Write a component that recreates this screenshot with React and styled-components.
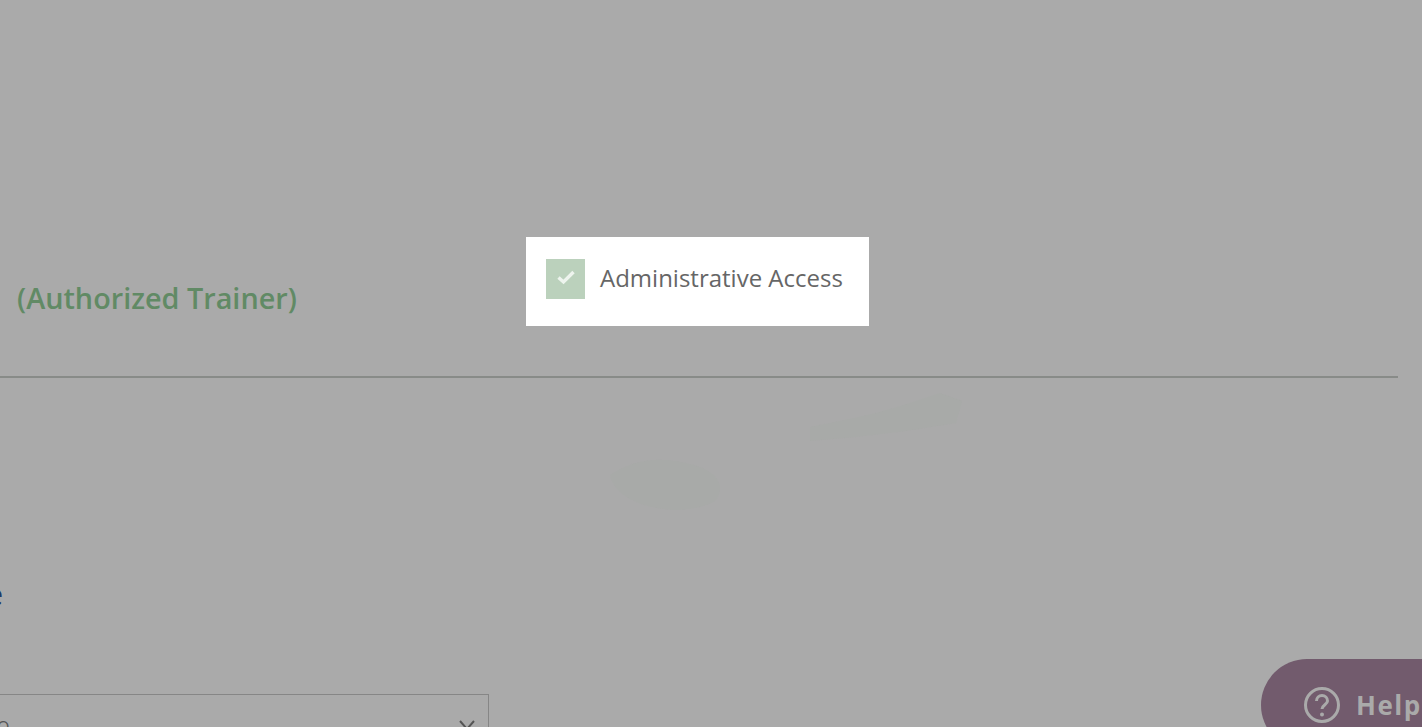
import React from "react";
import styled, { createGlobalStyle } from "styled-components";

const GlobalStyle = createGlobalStyle`
  html, body {
    margin: 0;
    padding: 0;
    height: 100%;
    overflow: hidden;
    background-color: #aaaaaa;
    font-family: "Open Sans", "Liberation Sans", sans-serif;
  }
`;

const Page = styled.div`
  position: relative;
  width: 1422px;
  height: 727px;
  overflow: hidden;
  background-color: #aaaaaa;
`;

const Content = styled.div`
  display: flex;
  flex-direction: column;
  width: 1398px;
  padding-top: 279px;
`;

const Role = styled.div`
  padding-left: 17px;
  font-size: 28.8px;
  line-height: 38px;
  font-weight: 600;
  color: #618a65;
`;

const Divider = styled.hr`
  width: 100%;
  height: 2px;
  margin: 59px 0 0;
  border: none;
  background-color: #888b88;
`;

const SectionTitle = styled.h2`
  width: 3px;
  height: 44px;
  margin: 194px 0 0;
  overflow: hidden;
  direction: rtl;
  font-size: 30px;
  line-height: 44px;
  font-weight: 400;
  color: #1f3a66;
`;

const SelectBox = styled.div`
  display: flex;
  align-items: flex-start;
  justify-content: space-between;
  box-sizing: border-box;
  width: 489px;
  height: 60px;
  margin-top: 78px;
  padding: 22px 12px 0 0;
  border: 1px solid #868686;
  border-left: none;
  font-size: 16px;
  line-height: 20px;
  color: #555555;
`;

const SelectValue = styled.span`
  margin-left: -3px;
`;

const ChevronIcon = styled.svg`
  width: 18px;
  height: 12px;
  margin-top: 3px;
  fill: none;
  stroke: #555555;
  stroke-width: 2;
`;

const Watermark = styled.svg`
  position: absolute;
  left: 600px;
  top: 385px;
  width: 380px;
  height: 140px;
  fill: #a8aaa8;
`;

const AccessCard = styled.label`
  position: absolute;
  left: 526px;
  top: 237px;
  display: flex;
  align-items: center;
  gap: 15px;
  box-sizing: border-box;
  width: 343px;
  height: 89px;
  padding: 0 20px 8px;
  background-color: #ffffff;
  font-size: 24px;
  font-weight: 500;
  color: #666666;
`;

const CheckBox = styled.span`
  display: flex;
  align-items: center;
  justify-content: center;
  width: 39px;
  height: 40px;
  margin-top: 2px;
  background-color: #bbd1bc;
`;

const CheckIcon = styled.svg`
  width: 20px;
  height: 16px;
  margin-top: -4px;
  fill: none;
  stroke: #eef4ee;
  stroke-width: 3.4;
`;

const HelpButton = styled.button`
  position: absolute;
  left: 1261px;
  top: 659px;
  display: flex;
  align-items: center;
  gap: 15px;
  box-sizing: border-box;
  width: 200px;
  height: 92px;
  padding: 0 0 0 42px;
  border: none;
  border-radius: 46px 0 0 46px;
  background-color: #725b6d;
  font-family: inherit;
  font-size: 26px;
  font-weight: 700;
  letter-spacing: 1.5px;
  color: #aaaaaa;
`;

const HelpIcon = styled.svg`
  flex: none;
  width: 38px;
  height: 38px;
  fill: none;
  stroke: #aaaaaa;
  stroke-width: 3;
`;

export default function App() {
  return (
    <>
      <GlobalStyle />
      <Page>
        <Content>
          <Role>(Authorized Trainer)</Role>
          <Divider />
          <SectionTitle>e</SectionTitle>
          <SelectBox>
            <SelectValue>O</SelectValue>
            <ChevronIcon viewBox="0 0 18 12">
              <path d="M2 1l7 8 7-8" />
            </ChevronIcon>
          </SelectBox>
        </Content>
        <Watermark viewBox="0 0 380 140">
          <path d="M10 90c30-20 60-18 90-8 20 8 25 22 15 34-20 12-60 12-85-2-10-6-18-14-20-24z" />
          <path d="M210 42c40-8 70-14 100-24l30-10 22 8-6 22-50 8-50 6-46 4z" />
        </Watermark>
        <AccessCard>
          <CheckBox>
            <CheckIcon viewBox="0 0 20 16">
              <path d="M2.5 8.5l5 4.500 10-10" />
            </CheckIcon>
          </CheckBox>
          Administrative Access
        </AccessCard>
        <HelpButton>
          <HelpIcon viewBox="0 0 38 38">
            <circle cx="19" cy="19" r="16.500" />
            <path d="M13.500 15a5.500 5.500 0 0 1 11 0c0 3.500-5.500 4-5.500 8" />
            <circle cx="19" cy="28.500" r="2" fill="#aaaaaa" stroke="none" />
          </HelpIcon>
          Help
        </HelpButton>
      </Page>
    </>
  );
}
